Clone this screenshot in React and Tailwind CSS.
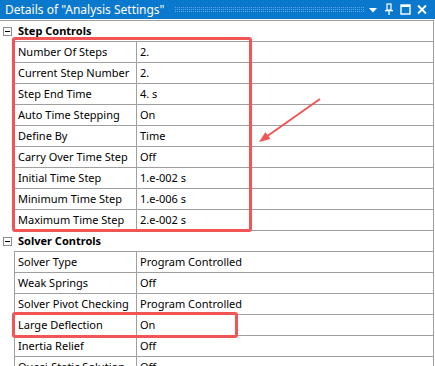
import React from "react";

const section1 = [
  ["Number Of Steps", "2."],
  ["Current Step Number", "2."],
  ["Step End Time", "4. s"],
  ["Auto Time Stepping", "On"],
  ["Define By", "Time"],
  ["Carry Over Time Step", "Off"],
  ["Initial Time Step", "1.e-002 s"],
  ["Minimum Time Step", "1.e-006 s"],
  ["Maximum Time Step", "2.e-002 s"],
];

const section2 = [
  ["Solver Type", "Program Controlled"],
  ["Weak Springs", "Off"],
  ["Solver Pivot Checking", "Program Controlled"],
  ["Large Deflection", "On"],
  ["Inertia Relief", "Off"],
  ["Quasi-Static Solution", "Off"],
];

function Header({ title }) {
  return (
    <div className="flex h-[21px]">
      <div className="w-[14px] flex items-center pl-[3px]">
        <div className="w-[9px] h-[9px] border border-[#8c8c8c] bg-white flex items-center justify-center">
          <div className="w-[5px] h-[1px] bg-black" />
        </div>
      </div>
      <div className="w-[420px] border-b border-r border-[#a0a0a0] flex items-center pl-[4px] font-bold whitespace-nowrap">
        {title}
      </div>
    </div>
  );
}

function Row({ label, value }) {
  return (
    <div className="flex h-[21px]">
      <div className="w-[14px]" />
      <div className="w-[420px] flex border-l border-r border-b border-[#a0a0a0]">
        <div className="w-[122px] border-r border-[#a0a0a0] flex items-center pl-[3px] whitespace-nowrap overflow-hidden">
          {label}
        </div>
        <div className="flex-1 flex items-center pl-[3px] whitespace-nowrap">{value}</div>
      </div>
    </div>
  );
}

export default function App() {
  return (
    <div className="relative w-[435px] h-[366px] overflow-hidden bg-white text-black text-[11px] font-['Noto_Sans',sans-serif]">
      <div className="h-[19px] bg-[#0a78cc] flex items-center pl-[5px] pr-[8px]">
        <span className="text-white text-[12px] leading-none whitespace-nowrap">
          Details of "Analysis Settings"
        </span>
        <div className="flex-1 ml-[10px] mr-[3px] h-[6px] bg-[radial-gradient(circle_at_0.5px_0.5px,#5fa6e4_0.6px,transparent_0.75px)] bg-[length:2px_2px]" />
        <svg width="60" height="19" viewBox="0 0 60 19" className="shrink-0">
          <polygon points="2,8 10,8 6,12.5" fill="#fff" />
          <rect x="20" y="4" width="4" height="6" fill="none" stroke="#fff" strokeWidth="1.2" />
          <rect x="18" y="10" width="8" height="1.3" fill="#fff" />
          <rect x="21.4" y="10" width="1.3" height="5" fill="#fff" />
          <rect x="34" y="5" width="9" height="9" fill="none" stroke="#fff" strokeWidth="1.4" />
          <rect x="34" y="5" width="9" height="2" fill="#fff" />
          <path d="M51 5.5 L59 13.5 M59 5.5 L51 13.5" stroke="#fff" strokeWidth="1.8" />
        </svg>
      </div>
      <div className="h-[1px] bg-white" />
      <div className="w-[434px] border-t border-[#a0a0a0]">
        <Header title="Step Controls" />
        {section1.map(([l, v]) => (
          <Row key={l} label={l} value={v} />
        ))}
        <Header title="Solver Controls" />
        {section2.map(([l, v]) => (
          <Row key={l} label={l} value={v} />
        ))}
      </div>

      <div className="absolute left-[12px] top-[37px] w-[240px] h-[195px] border-[3px] border-[#f25555] rounded-[3px] pointer-events-none" />
      <div className="absolute left-[12px] top-[312px] w-[226px] h-[26px] border-[3px] border-[#f25555] rounded-[3px] pointer-events-none" />
      <svg className="absolute left-0 top-0 pointer-events-none" width="435" height="366">
        <line x1="320" y1="99" x2="266" y2="137" stroke="#f25555" strokeWidth="2" />
        <polygon points="259,142 270.5,139 265.5,132" fill="#f25555" />
      </svg>
    </div>
  );
}
